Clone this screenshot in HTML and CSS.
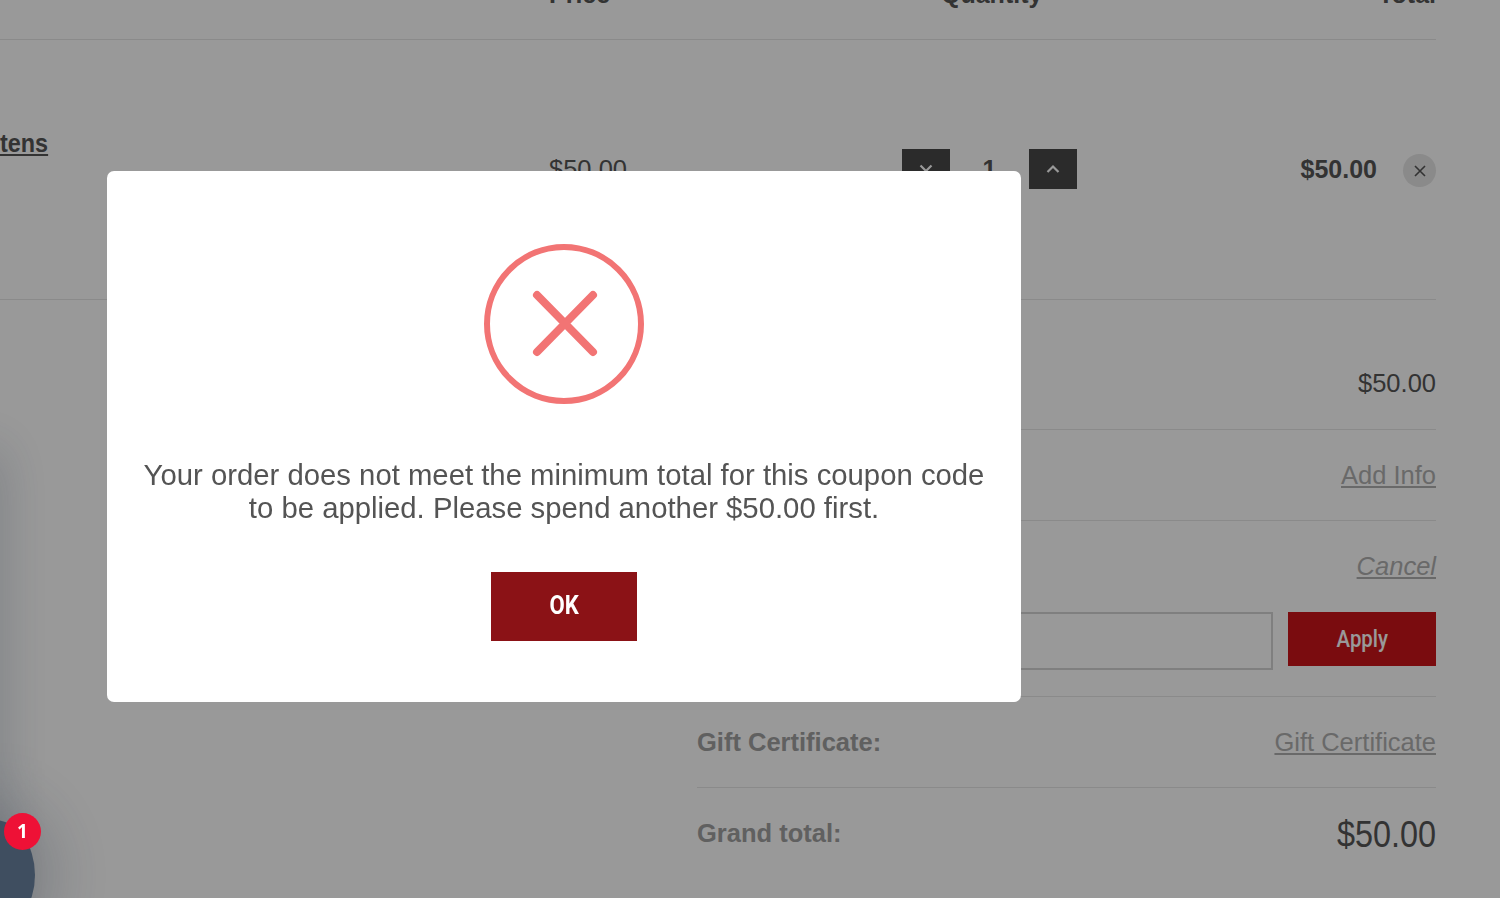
FILE: index.html
```html
<!DOCTYPE html>
<html lang="en">
<head>
  <meta charset="UTF-8" />
  <meta name="viewport" content="width=device-width, initial-scale=1.0"/>
  <title>Cart</title>
  <link rel="stylesheet" href="styles.css">
</head>
<body>
  <div class="cart">
    <div class="cart-head">
      <div></div>
      <div class="head-price">Price</div>
      <div class="head-qty">Quantity</div>
      <div class="head-total">Total</div>
    </div>

    <div class="cart-item">
      <div><a href="#" class="item-name">tens</a></div>
      <div class="item-price">$50.00</div>
      <div class="qty">
        <button class="qty-btn">
          <svg width="16" height="10" viewBox="0 0 16 10"><path d="M2.5 1.5 8 7l5.500-5.500" /></svg>
        </button>
        <span class="qty-num">1</span>
        <button class="qty-btn">
          <svg width="16" height="10" viewBox="0 0 16 10"><path d="M2.500 8 8 2.500 13.500 8" /></svg>
        </button>
      </div>
      <div class="item-total">
        <span class="item-sum">$50.00</span>
        <button class="remove-btn">
          <svg width="14" height="14" viewBox="0 0 14 14"><path d="M2 2l10 10M12 2 2 12" /></svg>
        </button>
      </div>
    </div>

    <div class="summary">
      <div class="row first"><span></span><span class="row-value">$50.00</span></div>
      <div class="row"><span></span><a href="#">Add Info</a></div>
      <div class="row coupon">
        <div class="coupon-top"><span></span><a href="#" class="cancel">Cancel</a></div>
        <div class="coupon-form">
          <input type="text" class="coupon-input">
          <button class="apply-btn"><span class="narrow">Apply</span></button>
        </div>
      </div>
      <div class="row"><span class="row-label">Gift Certificate:</span><a href="#">Gift Certificate</a></div>
      <div class="row grand"><span class="row-label">Grand total:</span><span class="grand-sum">$50.00</span></div>
    </div>
  </div>

  <div class="edge-shade"></div>
  <div class="chat-bubble"></div>
  <div class="overlay"></div>
  <div class="chat-badge">1</div>

  <div class="modal">
    <svg class="modal-icon" width="160" height="160" viewBox="0 0 160 160">
      <circle cx="80" cy="80" r="77" />
      <path d="M53 51l56 57M109 51 53 108" />
    </svg>
    <p class="modal-text">Your order does not meet the minimum total for this coupon code<br>to be applied. Please spend another $50.00 first.</p>
    <button class="ok-btn"><span class="narrow">OK</span></button>
  </div>
</body>
</html>
```

FILE: styles.css
```css
html, body {
  height: 100%;
}

body {
  margin: 0;
  overflow: hidden;
  background: #fff;
  color: #555;
  font-family: 'Liberation Sans', Arial, sans-serif;
}

a {
  color: #b0b0b0;
}

button {
  border: none;
  padding: 0;
  cursor: pointer;
}

.narrow {
  display: inline-block;
  transform: scaleX(0.85);
}

.cart {
  width: 1436px;
  margin-top: -20px;
}

.cart-head,
.cart-item {
  display: grid;
  grid-template-columns: 549px 353px 1fr 181px;
  border-bottom: 1px solid #e6e6e6;
}

.cart-head {
  height: 60px;
  padding-bottom: 31px;
  box-sizing: border-box;
  align-items: end;
  font-weight: bold;
  font-size: 25px;
  line-height: 28px;
}

.head-qty {
  padding-left: 39px;
  white-space: nowrap;
}

.head-total {
  text-align: right;
}

.cart-item {
  height: 260px;
  box-sizing: border-box;
  align-items: center;
}

.item-name {
  display: inline-block;
  transform: scaleX(0.9);
  transform-origin: left;
  font-weight: bold;
  font-size: 26px;
  color: #555;
  margin-bottom: 52px;
}

.item-price {
  font-size: 25.500px;
}

.qty {
  display: flex;
  align-items: center;
  margin-top: -1px;
}

.qty-btn {
  width: 48px;
  height: 40px;
  background: #484848;
  display: flex;
  align-items: center;
  justify-content: center;
}

.qty-btn svg path {
  fill: none;
  stroke: #fff;
  stroke-width: 2.200;
}

.qty-num {
  width: 79px;
  text-align: center;
  font-size: 25px;
  font-weight: bold;
}

.item-total {
  display: flex;
  align-items: center;
  justify-content: flex-end;
  gap: 26px;
}

.item-sum {
  font-size: 25px;
  font-weight: bold;
}

.remove-btn {
  width: 33px;
  height: 33px;
  margin-top: 2px;
  border-radius: 50%;
  background: #e6e6e6;
  display: flex;
  align-items: center;
  justify-content: center;
}

.remove-btn svg path {
  fill: none;
  stroke: #555;
  stroke-width: 1.600;
}

.summary {
  margin-left: 697px;
  font-size: 25.500px;
}

.row {
  height: 91px;
  box-sizing: border-box;
  display: flex;
  align-items: center;
  justify-content: space-between;
  border-bottom: 1px solid #e6e6e6;
}

.row.first {
  height: 130px;
  padding-top: 38px;
}

.row-label {
  font-weight: bold;
  color: #a0a0a0;
}

.coupon {
  height: 176px;
  display: block;
  padding-top: 27px;
}

.coupon-top {
  display: flex;
  justify-content: space-between;
  align-items: center;
  height: 36px;
  margin-bottom: 28px;
}

.cancel {
  font-style: italic;
}

.coupon-form {
  display: flex;
  align-items: flex-start;
  gap: 15px;
}

.coupon-input {
  flex: 1;
  min-width: 0;
  height: 58px;
  box-sizing: border-box;
  border: 2px solid #d4d4d4;
  background: #fff;
}

.apply-btn {
  width: 148px;
  height: 54px;
  background: #cc1519;
  color: #fff;
  font-family: Roboto, sans-serif;
  font-weight: 500;
  font-size: 24px;
}

.grand {
  border-bottom: none;
}

.grand-sum {
  display: inline-block;
  transform: scaleX(0.9);
  transform-origin: right;
  margin-top: 2px;
  font-size: 36px;
}

.edge-shade {
  position: fixed;
  left: -40px;
  top: 450px;
  width: 40px;
  height: 500px;
  box-shadow: 0 0 50px rgba(70, 90, 120, 0.28);
}

.chat-bubble {
  position: fixed;
  left: -45px;
  top: 820px;
  width: 80px;
  height: 110px;
  border-radius: 50%;
  background: #6a83a0;
  box-shadow: 0 0 60px 20px rgba(70, 90, 120, 0.25);
}

.overlay {
  position: fixed;
  inset: 0;
  background: rgba(0, 0, 0, 0.4);
}

.chat-badge {
  position: fixed;
  left: 4px;
  top: 813px;
  width: 37px;
  height: 37px;
  border-radius: 50%;
  background: #ee1136;
  color: #fff;
  font-family: 'Open Sans', sans-serif;
  font-weight: bold;
  font-size: 19px;
  line-height: 37px;
  text-align: center;
}

.modal {
  position: fixed;
  left: 107px;
  top: 171px;
  width: 914px;
  height: 531px;
  box-sizing: border-box;
  padding-top: 73px;
  background: #fff;
  border-radius: 7px;
  display: flex;
  flex-direction: column;
  align-items: center;
}

.modal-icon circle {
  fill: none;
  stroke: #f27474;
  stroke-width: 6;
}

.modal-icon path {
  fill: none;
  stroke: #f27474;
  stroke-width: 8;
  stroke-linecap: round;
}

.modal-text {
  margin: 54px 0 48px;
  font-size: 29.300px;
  line-height: 33px;
  text-align: center;
  color: #545454;
  white-space: nowrap;
}

.ok-btn {
  width: 146px;
  height: 69px;
  padding-bottom: 3px;
  background: #8b1216;
  color: #fff;
  font-family: Roboto, sans-serif;
  font-weight: bold;
  font-size: 26px;
}
```
